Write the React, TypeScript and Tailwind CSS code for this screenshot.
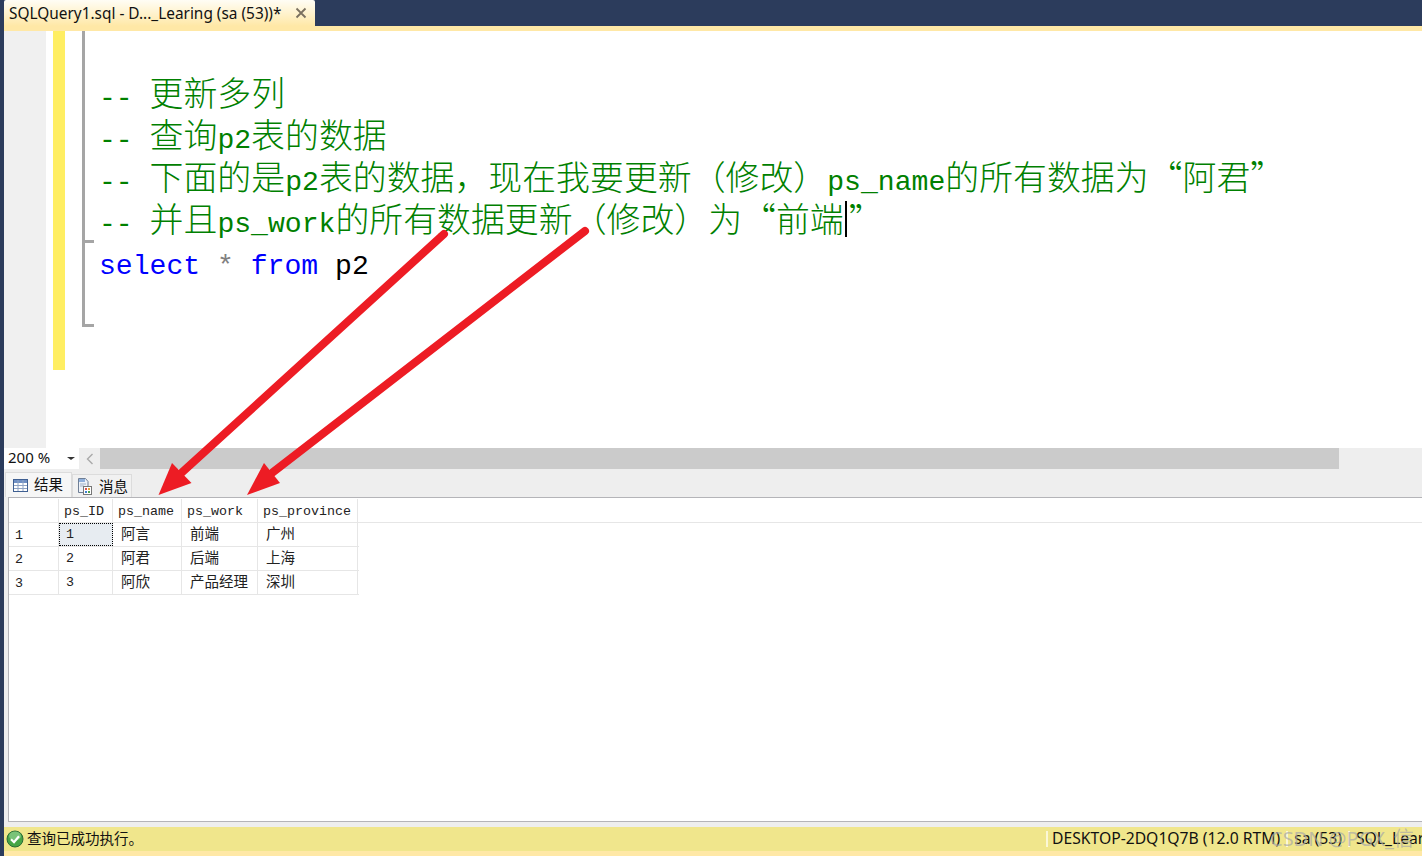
import React from "react";

const FONT_UI = "font-['Noto_Sans','Noto_Sans_CJK_SC',sans-serif]";

// SSMS 的等宽字体：拉丁字符和中文用不同字号，才能对上 1:2 的字宽
function CodeText({ text, className }: { text: string; className: string }) {
  const parts = text.match(/[\x00-\x7f]+|[^\x00-\x7f]+/g) || [];
  return (
    <span className={className}>
      {parts.map((p, i) =>
        /^[\x00-\x7f]/.test(p) ? (
          <span key={i} className="font-['Liberation_Mono',monospace] text-[28.1px] whitespace-pre">
            {p}
          </span>
        ) : (
          <span key={i} className="font-['Noto_Sans_CJK_SC',sans-serif] text-[33.9px] font-light whitespace-pre [text-spacing-trim:space-all]">
            {p}
          </span>
        )
      )}
    </span>
  );
}

function GridText({ text }: { text: string }) {
  return <span className="font-['Noto_Sans_CJK_SC',sans-serif] text-[14.5px] text-[#222] -translate-y-[2px]">{text}</span>;
}

const comments = [
  "-- 更新多列",
  "-- 查询p2表的数据",
  "-- 下面的是p2表的数据，现在我要更新（修改）ps_name的所有数据为“阿君”",
  "-- 并且ps_work的所有数据更新（修改）为“前端",
];

const columns = [
  { name: "ps_ID", width: "w-[54px]" },
  { name: "ps_name", width: "w-[69px]" },
  { name: "ps_work", width: "w-[76px]" },
  { name: "ps_province", width: "w-[100px]" },
];

const rows = [
  ["1", "1", "阿言", "前端", "广州"],
  ["2", "2", "阿君", "后端", "上海"],
  ["3", "3", "阿欣", "产品经理", "深圳"],
];

function GridIcon() {
  return (
    <svg width="15" height="13" viewBox="0 0 15 13" className="shrink-0">
      <rect x="0.5" y="0.5" width="14" height="12" fill="#fff" stroke="#3f5f92" />
      <rect x="1" y="1" width="13" height="3" fill="#6f8fc4" />
      <path d="M1 6.5h13M1 9.5h13M5 1v11M10 1v11" stroke="#8fa3c4" fill="none" />
    </svg>
  );
}

function MessageIcon() {
  return (
    <svg width="15" height="18" viewBox="0 0 15 18" className="shrink-0">
      <path d="M1.5 1.5h7l2.5 3v11h-9.5z" fill="#eef2f8" stroke="#6f7f96" />
      <rect x="2" y="2" width="6" height="3" fill="#8fb0dc" />
      <path d="M3 7h6M3 9h4" stroke="#9fb0c8" />
      <rect x="6.5" y="9.5" width="8" height="8" fill="#fff" stroke="#777" />
      <rect x="8" y="11" width="2" height="2" fill="#d9534f" />
      <rect x="11" y="11" width="2" height="2" fill="#e8a33d" />
      <rect x="8" y="14" width="2" height="2" fill="#3f7fd0" />
      <rect x="11" y="14" width="2" height="2" fill="#4da34d" />
    </svg>
  );
}

function SuccessIcon() {
  return (
    <svg width="18" height="18" viewBox="0 0 18 18" className="shrink-0">
      <circle cx="9" cy="9" r="8" fill="#46a546" stroke="#2b6b35" />
      <ellipse cx="9" cy="6" rx="6" ry="4.5" fill="#8fd08f" opacity="0.7" />
      <path d="M5 9.2l3 3 5-6" stroke="#fff" strokeWidth="2.2" fill="none" />
    </svg>
  );
}

export default function App() {
  return (
    <div className={`relative w-[1422px] h-[856px] overflow-hidden bg-[#2c3c5c] pl-1 flex flex-col ${FONT_UI}`}>
      {/* 文档标签 */}
      <div className="h-[26px] shrink-0 flex">
        <div className="w-[311px] rounded-t-[2px] bg-gradient-to-b from-[#fffdf5] to-[#ffe8a6] flex items-center pl-[5px] text-[15.4px] text-[#111] whitespace-nowrap">
          <span className="w-[285px] overflow-hidden translate-y-[1px]">SQLQuery1.sql - D..._Learing (sa (53))*</span>
          <svg width="12" height="12" viewBox="0 0 12 12" className="ml-[1px]">
            <path d="M1.5 1.5l9 9M10.5 1.5l-9 9" stroke="#7a7060" strokeWidth="1.8" />
          </svg>
        </div>
      </div>
      <div className="h-[5px] shrink-0 bg-[#ffe8a6]" />

      {/* 编辑器 */}
      <div className="h-[417px] shrink-0 bg-white flex">
        <div className="w-[42px] bg-[#f0f0f0]" />
        <div className="w-[7px]" />
        <div className="w-[12px] h-[339px] bg-[#ffee62]" />
        <div className="w-[17px]" />
        <div className="w-[17px] shrink-0 flex flex-col">
          <div className="w-[12px] h-[212px] border-l-[3px] border-b-[3px] border-[#a5a5a5]" />
          <div className="w-[12px] h-[84px] border-l-[3px] border-b-[3px] border-[#a5a5a5]" />
        </div>
        <div className="pt-[40px] text-[#008000] whitespace-nowrap">
          {comments.map((line, i) => (
            <div key={i} className="h-[42.3px] leading-[42.3px] flex items-center">
              <CodeText text={line} className="flex items-baseline translate-y-[3px]" />
              {i === 3 && (
                <>
                  <span className="w-[2px] h-[36px] ml-[1px] bg-black" />
                  <span className="ml-[2px] font-['Noto_Sans_CJK_SC',sans-serif] text-[33.9px] font-light">”</span>
                </>
              )}
            </div>
          ))}
          <div className="h-[48px] pt-[5px] flex items-center font-['Liberation_Mono',monospace] text-[28.1px] whitespace-pre">
            <span className="text-[#0000ff]">select</span>
            <span className="text-[#808080]"> * </span>
            <span className="text-[#0000ff]">from</span>
            <span className="text-black"> p2</span>
          </div>
        </div>
      </div>

      {/* 缩放和滚动条 */}
      <div className="h-[21px] shrink-0 bg-[#eeeeee] flex items-stretch">
        <div className="w-[75px] bg-white flex items-center justify-between pl-1 pr-[4px] text-[15px] leading-[19px] text-[#111]">
          <span className="-translate-y-[1px]">200 %</span>
          <span className="w-0 h-0 border-x-[4px] border-x-transparent border-t-[3px] border-t-[#333]" />
        </div>
        <div className="w-[21px] flex items-center justify-center">
          <svg width="8" height="12" viewBox="0 0 8 12">
            <path d="M6.5 1L1.5 6l5 5" stroke="#aaa" strokeWidth="1.4" fill="none" />
          </svg>
        </div>
        <div className="w-[1239px] bg-[#cbcbcb]" />
      </div>

      {/* 结果标签 */}
      <div className="h-[28px] shrink-0 bg-[#eeeeee] flex items-end pl-[1px] text-[14.5px] text-[#111]">
        <div className="h-[25px] w-[67px] bg-[#f6f6f6] border border-b-0 border-[#dcdcdc] flex items-center gap-[6px] pl-[7px]">
          <GridIcon />
          <span className="font-['Noto_Sans_CJK_SC',sans-serif] -translate-y-[1px]">结果</span>
        </div>
        <div className="h-[23px] w-[60px] bg-[#f1f1f1] border border-b-0 border-[#dcdcdc] flex items-center gap-[7px] pl-[4px]">
          <MessageIcon />
          <span className="font-['Noto_Sans_CJK_SC',sans-serif]">消息</span>
        </div>
      </div>

      {/* 结果表格 */}
      <div className="h-[325px] shrink-0 bg-[#eeeeee] pl-1">
        <div className="h-full bg-white border border-[#b4b4b8] border-r-0 pt-[1px]">
          <div className="flex h-[24px] border-b border-[#e6e6e6]">
            <div className="w-[50px] border-r border-[#e6e6e6]" />
            {columns.map((c) => (
              <div
                key={c.name}
                className={`${c.width} border-r border-[#e6e6e6] flex items-center pl-[5px] pt-[2px] font-['Liberation_Mono',monospace] text-[13.33px] text-[#222]`}
              >
                {c.name}
              </div>
            ))}
          </div>
          {rows.map((r, i) => (
            <div key={i} className="flex h-[24px] w-[350px] border-b border-[#e6e6e6] font-['Liberation_Mono',monospace] text-[13.33px] text-[#222]">
              <div className="w-[50px] border-r border-[#e6e6e6] flex items-center pl-[6px] pt-[2px]">{r[0]}</div>
              {i === 0 ? (
                <div className="w-[54px] bg-[#e7ecf1] border border-dotted border-black flex items-center pl-[6px]">{r[1]}</div>
              ) : (
                <div className="w-[54px] border-r border-[#e6e6e6] flex items-center pl-[7px]">{r[1]}</div>
              )}
              <div className="w-[69px] border-r border-[#e6e6e6] flex items-center pl-2"><GridText text={r[2]} /></div>
              <div className="w-[76px] border-r border-[#e6e6e6] flex items-center pl-2"><GridText text={r[3]} /></div>
              <div className="w-[100px] border-r border-[#e6e6e6] flex items-center pl-2"><GridText text={r[4]} /></div>
            </div>
          ))}
        </div>
      </div>
      <div className="h-[5px] shrink-0 bg-[#eeeeee]" />

      {/* 状态栏 */}
      <div className="h-[24px] shrink-0 bg-[#f0e68c] flex items-center text-[15.7px] text-[#111] whitespace-nowrap">
        <div className="ml-[2px] mr-[3px]"><SuccessIcon /></div>
        <span className="font-['Noto_Sans_CJK_SC',sans-serif] text-[14.5px] -translate-y-[1px]">查询已成功执行。</span>
        <div className="flex-1" />
        <div className="w-[376px] shrink-0 flex items-center overflow-hidden">
          <span className="w-[2px] h-[16px] bg-[#fbf7d6] mr-[4px] shrink-0" />
          <span className="shrink-0">DESKTOP-2DQ1Q7B (12.0 RTM)</span>
          <span className="w-[2px] h-[16px] bg-[#fbf7d6] mx-[6px] shrink-0" />
          <span className="shrink-0">sa (53)</span>
          <span className="w-[2px] h-[16px] bg-[#fbf7d6] mx-[6px] shrink-0" />
          <span className="shrink-0">SQL_Learing</span>
        </div>
      </div>
      <div className="h-[5px] shrink-0 bg-[#ffe8a6]" />

      {/* 截图上的红色箭头 */}
      <svg className="absolute left-0 top-0 pointer-events-none" width="1422" height="856" viewBox="0 0 1422 856">
        <path d="M444 234L178 476" stroke="#ed1c24" strokeWidth="8" strokeLinecap="round" fill="none" />
        <path d="M158.5 495L172 463L191.5 483Z" fill="#ed1c24" />
        <path d="M585 231L268 476" stroke="#ed1c24" strokeWidth="8" strokeLinecap="round" fill="none" />
        <path d="M247 495L264 463L280 483Z" fill="#ed1c24" />
      </svg>

      {/* 水印 */}
      <div className="absolute left-[1270px] top-[824px] text-[20px] text-[#a8a8a8]/70 whitespace-nowrap font-['Noto_Sans','Noto_Sans_CJK_SC',sans-serif]">
        CSDN @PGX_信
      </div>
    </div>
  );
}
